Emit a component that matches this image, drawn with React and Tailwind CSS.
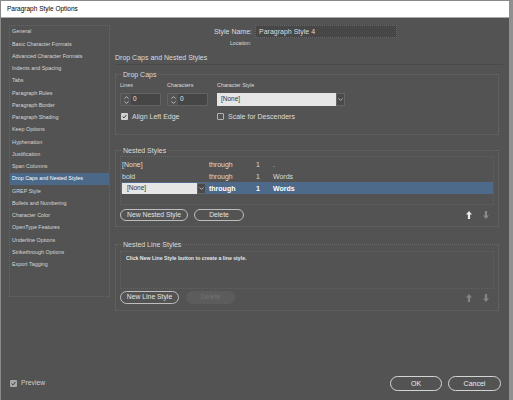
import React from "react";

const SECTIONS = [
  "General",
  "Basic Character Formats",
  "Advanced Character Formats",
  "Indents and Spacing",
  "Tabs",
  "Paragraph Rules",
  "Paragraph Border",
  "Paragraph Shading",
  "Keep Options",
  "Hyphenation",
  "Justification",
  "Span Columns",
  "Drop Caps and Nested Styles",
  "GREP Style",
  "Bullets and Numbering",
  "Character Color",
  "OpenType Features",
  "Underline Options",
  "Strikethrough Options",
  "Export Tagging",
];

const NESTED = [
  { name: "[None]", thru: "through", n: "1", unit: "." },
  { name: "bold", thru: "through", n: "1", unit: "Words" },
  { name: "[None]", thru: "through", n: "1", unit: "Words", selected: true },
];

const Chevron = ({ up, color = "#cfcfcf" }) => (
  <svg width="5" height="3" viewBox="0 0 5 3">
    <path
      d={up ? "M0.5 2.6 L2.5 0.6 L4.5 2.6" : "M0.5 0.4 L2.5 2.4 L4.5 0.4"}
      fill="none"
      stroke={color}
      strokeWidth="0.8"
    />
  </svg>
);

const Arrow = ({ down, color }) => (
  <svg width="6" height="8" viewBox="0 0 6 8">
    <path
      d="M3 0 L6 3.5 H4.1 V8 H1.9 V3.5 H0 Z"
      fill={color}
      transform={down ? "rotate(180 3 4)" : undefined}
    />
  </svg>
);

const CheckBox = ({ checked, dim }) =>
  checked ? (
    <div
      className={`w-[7px] h-[7px] rounded-[1px] flex items-center justify-center ${
        dim ? "bg-[#a8a8a8]" : "bg-[#d2d2d2]"
      }`}
    >
      <svg width="5" height="5" viewBox="0 0 5 5">
        <path d="M0.6 2.6 L2 3.9 L4.4 1" fill="none" stroke="#3a3a3a" strokeWidth="1" />
      </svg>
    </div>
  ) : (
    <div className="w-[7px] h-[7px] rounded-[1px] border border-[#b4b4b4]" />
  );

const Spinner = () => (
  <div className="w-[41px] h-[13px] flex border border-[#626262] rounded-[1px]">
    <div className="w-[10px] flex flex-col items-center justify-center gap-[2px]">
      <Chevron up />
      <Chevron />
    </div>
    <div className="flex-1 bg-[#464646] flex items-center pl-[2px] text-[6.5px] text-[#e4e4e4] leading-none">
      0
    </div>
  </div>
);

const Pill = ({ children, w, disabled }) => (
  <div
    className={`${w} h-full rounded-full flex items-center justify-center text-[6.8px] leading-none ${
      disabled
        ? "bg-[#5c5c5c] text-[#727272]"
        : "border border-[#bdbdbd] text-[#e2e2e2]"
    }`}
  >
    {children}
  </div>
);

const Group = ({ title, children, className = "" }) => (
  <fieldset className={`border border-dotted border-[#6a6a6a] px-[4px] ${className}`}>
    <legend className="ml-[2px] px-[1px] h-[9px] text-[7px] leading-[9px] text-[#dcdcdc]">
      {title}
    </legend>
    {children}
  </fieldset>
);

export default function App() {
  return (
    <div
      className="w-[513px] h-[400px] flex flex-col bg-[#535353] border-t border-l border-[#8a8a8a] border-r-[4px] border-r-[#909090] overflow-hidden"
      style={{ fontFamily: '"Liberation Sans", Arial, sans-serif' }}
    >
      {/* title bar */}
      <div className="h-[17px] bg-white border-b border-[#a8a8a8] flex items-center pl-[6px] text-[6.5px] text-black leading-none">
        Paragraph Style Options
      </div>

      <div className="flex pl-[8px] pt-[7px] pr-[7px]">
        {/* sections list */}
        <div className="w-[101px] h-[272px] border border-dotted border-[#666666] text-[5.4px] text-[#d6d6d6] leading-none">
          {SECTIONS.map((s) => (
            <div
              key={s}
              className={`h-[12.25px] flex items-center pl-[2px] ${
                s === "Drop Caps and Nested Styles" ? "bg-[#4b6888] text-white" : ""
              }`}
            >
              {s}
            </div>
          ))}
        </div>

        {/* main panel */}
        <div className="ml-[5px] w-[384px] flex flex-col text-[#dcdcdc]">
          <div className="h-[13px] flex items-center">
            <div className="w-[137px] text-right text-[7px] leading-none">Style Name:</div>
            <div className="ml-[3px] w-[142px] h-full bg-[#474747] border border-dotted border-[#676767] flex items-center pl-[3px] text-[7px] leading-none">
              Paragraph Style 4
            </div>
          </div>
          <div className="mt-[2px] h-[8px] flex items-center">
            <div className="w-[136px] text-right text-[5.2px] leading-none">Location:</div>
          </div>
          <div className="mt-[4px] h-[10px] flex items-center text-[7px] leading-none">
            Drop Caps and Nested Styles
          </div>
          <div className="mt-[2px] h-px bg-[#4a4a4a] -mr-[4px]" />

          <Group title="Drop Caps" className="mt-[5px] pb-[13px]">
            <div className="mt-[3px] h-[8px] flex items-center text-[5.4px] leading-none">
              <div className="w-[47px]">Lines</div>
              <div className="w-[50px]">Characters</div>
              <div>Character Style</div>
            </div>
            <div className="mt-[3px] h-[13px] flex">
              <Spinner />
              <div className="ml-[6px]">
                <Spinner />
              </div>
              <div className="ml-[9px] w-[128px] flex">
                <div className="flex-1 bg-[#e6e6e6] flex items-center pl-[4px] text-[6.5px] text-[#333] leading-none">
                  [None]
                </div>
                <div className="w-[9px] bg-[#4a4a4a] border border-[#656565] flex items-center justify-center">
                  <Chevron />
                </div>
              </div>
            </div>
            <div className="mt-[6px] h-[9px] flex items-center text-[7px] leading-none">
              <div className="w-[97px] flex items-center pl-[1px]">
                <CheckBox checked />
                <span className="ml-[4px]">Align Left Edge</span>
              </div>
              <div className="flex items-center">
                <CheckBox />
                <span className="ml-[4px]">Scale for Descenders</span>
              </div>
            </div>
          </Group>

          <Group title="Nested Styles" className="mt-[11px] pb-[5px]">
            <div className="mt-[1px] h-[49px] border border-dotted border-[#616161] pt-px text-[7px] leading-none">
              {NESTED.map((r, i) => (
                <div
                  key={i}
                  className={`h-[12px] flex items-center pl-px ${
                    r.selected ? "bg-[#4d6a8a] font-bold text-white" : ""
                  }`}
                >
                  {r.selected ? (
                    <div className="w-[87px] flex">
                      <div className="w-[75px] h-[11px] bg-[#e6e6e6] flex items-center pl-[5px] text-[6.5px] font-normal text-[#333]">
                        {r.name}
                      </div>
                      <div className="w-[9px] h-[11px] bg-[#4a4a4a] border border-[#666] flex items-center justify-center">
                        <Chevron />
                      </div>
                    </div>
                  ) : (
                    <div className="w-[87px]">{r.name}</div>
                  )}
                  <div className="w-[47px]">{r.thru}</div>
                  <div className="w-[17px]">{r.n}</div>
                  <div>{r.unit}</div>
                </div>
              ))}
            </div>
            <div className="mt-[4px] h-[12px] flex items-center">
              <Pill w="w-[68px]">New Nested Style</Pill>
              <div className="ml-[6px] h-full">
                <Pill w="w-[50px]">Delete</Pill>
              </div>
              <div className="ml-auto mr-[5px] flex items-center gap-[11px]">
                <Arrow color="#ececec" />
                <Arrow down color="#8a8a8a" />
              </div>
            </div>
          </Group>

          <Group title="Nested Line Styles" className="mt-[13px] pb-[6px]">
            <div className="mt-[2px] h-[38px] border border-dotted border-[#616161] pl-[5px] pt-[4px] text-[5.2px] font-bold leading-none text-[#e6e6e6]">
              Click New Line Style button to create a line style.
            </div>
            <div className="mt-[2px] h-[13px] flex items-center">
              <Pill w="w-[59px]">New Line Style</Pill>
              <div className="ml-[7px] h-full">
                <Pill w="w-[49px]" disabled>
                  Delete
                </Pill>
              </div>
              <div className="ml-auto mr-[5px] flex items-center gap-[11px]">
                <Arrow color="#858585" />
                <Arrow down color="#858585" />
              </div>
            </div>
          </Group>
        </div>
      </div>

      {/* footer */}
      <div className="mt-auto mb-[9px] h-[15px] flex items-center pl-[9px] pr-[8px]">
        <CheckBox checked dim />
        <span className="ml-[4px] text-[6.8px] leading-none text-[#cfcfcf]">Preview</span>
        <div className="ml-auto flex h-full gap-[6px]">
          <div className="w-[52px] h-full rounded-full border border-[#d4d4d4] flex items-center justify-center text-[7px] leading-none text-[#ececec]">
            OK
          </div>
          <div className="w-[53px] h-full rounded-full border border-[#d4d4d4] flex items-center justify-center text-[7px] leading-none text-[#ececec]">
            Cancel
          </div>
        </div>
      </div>
    </div>
  );
}
